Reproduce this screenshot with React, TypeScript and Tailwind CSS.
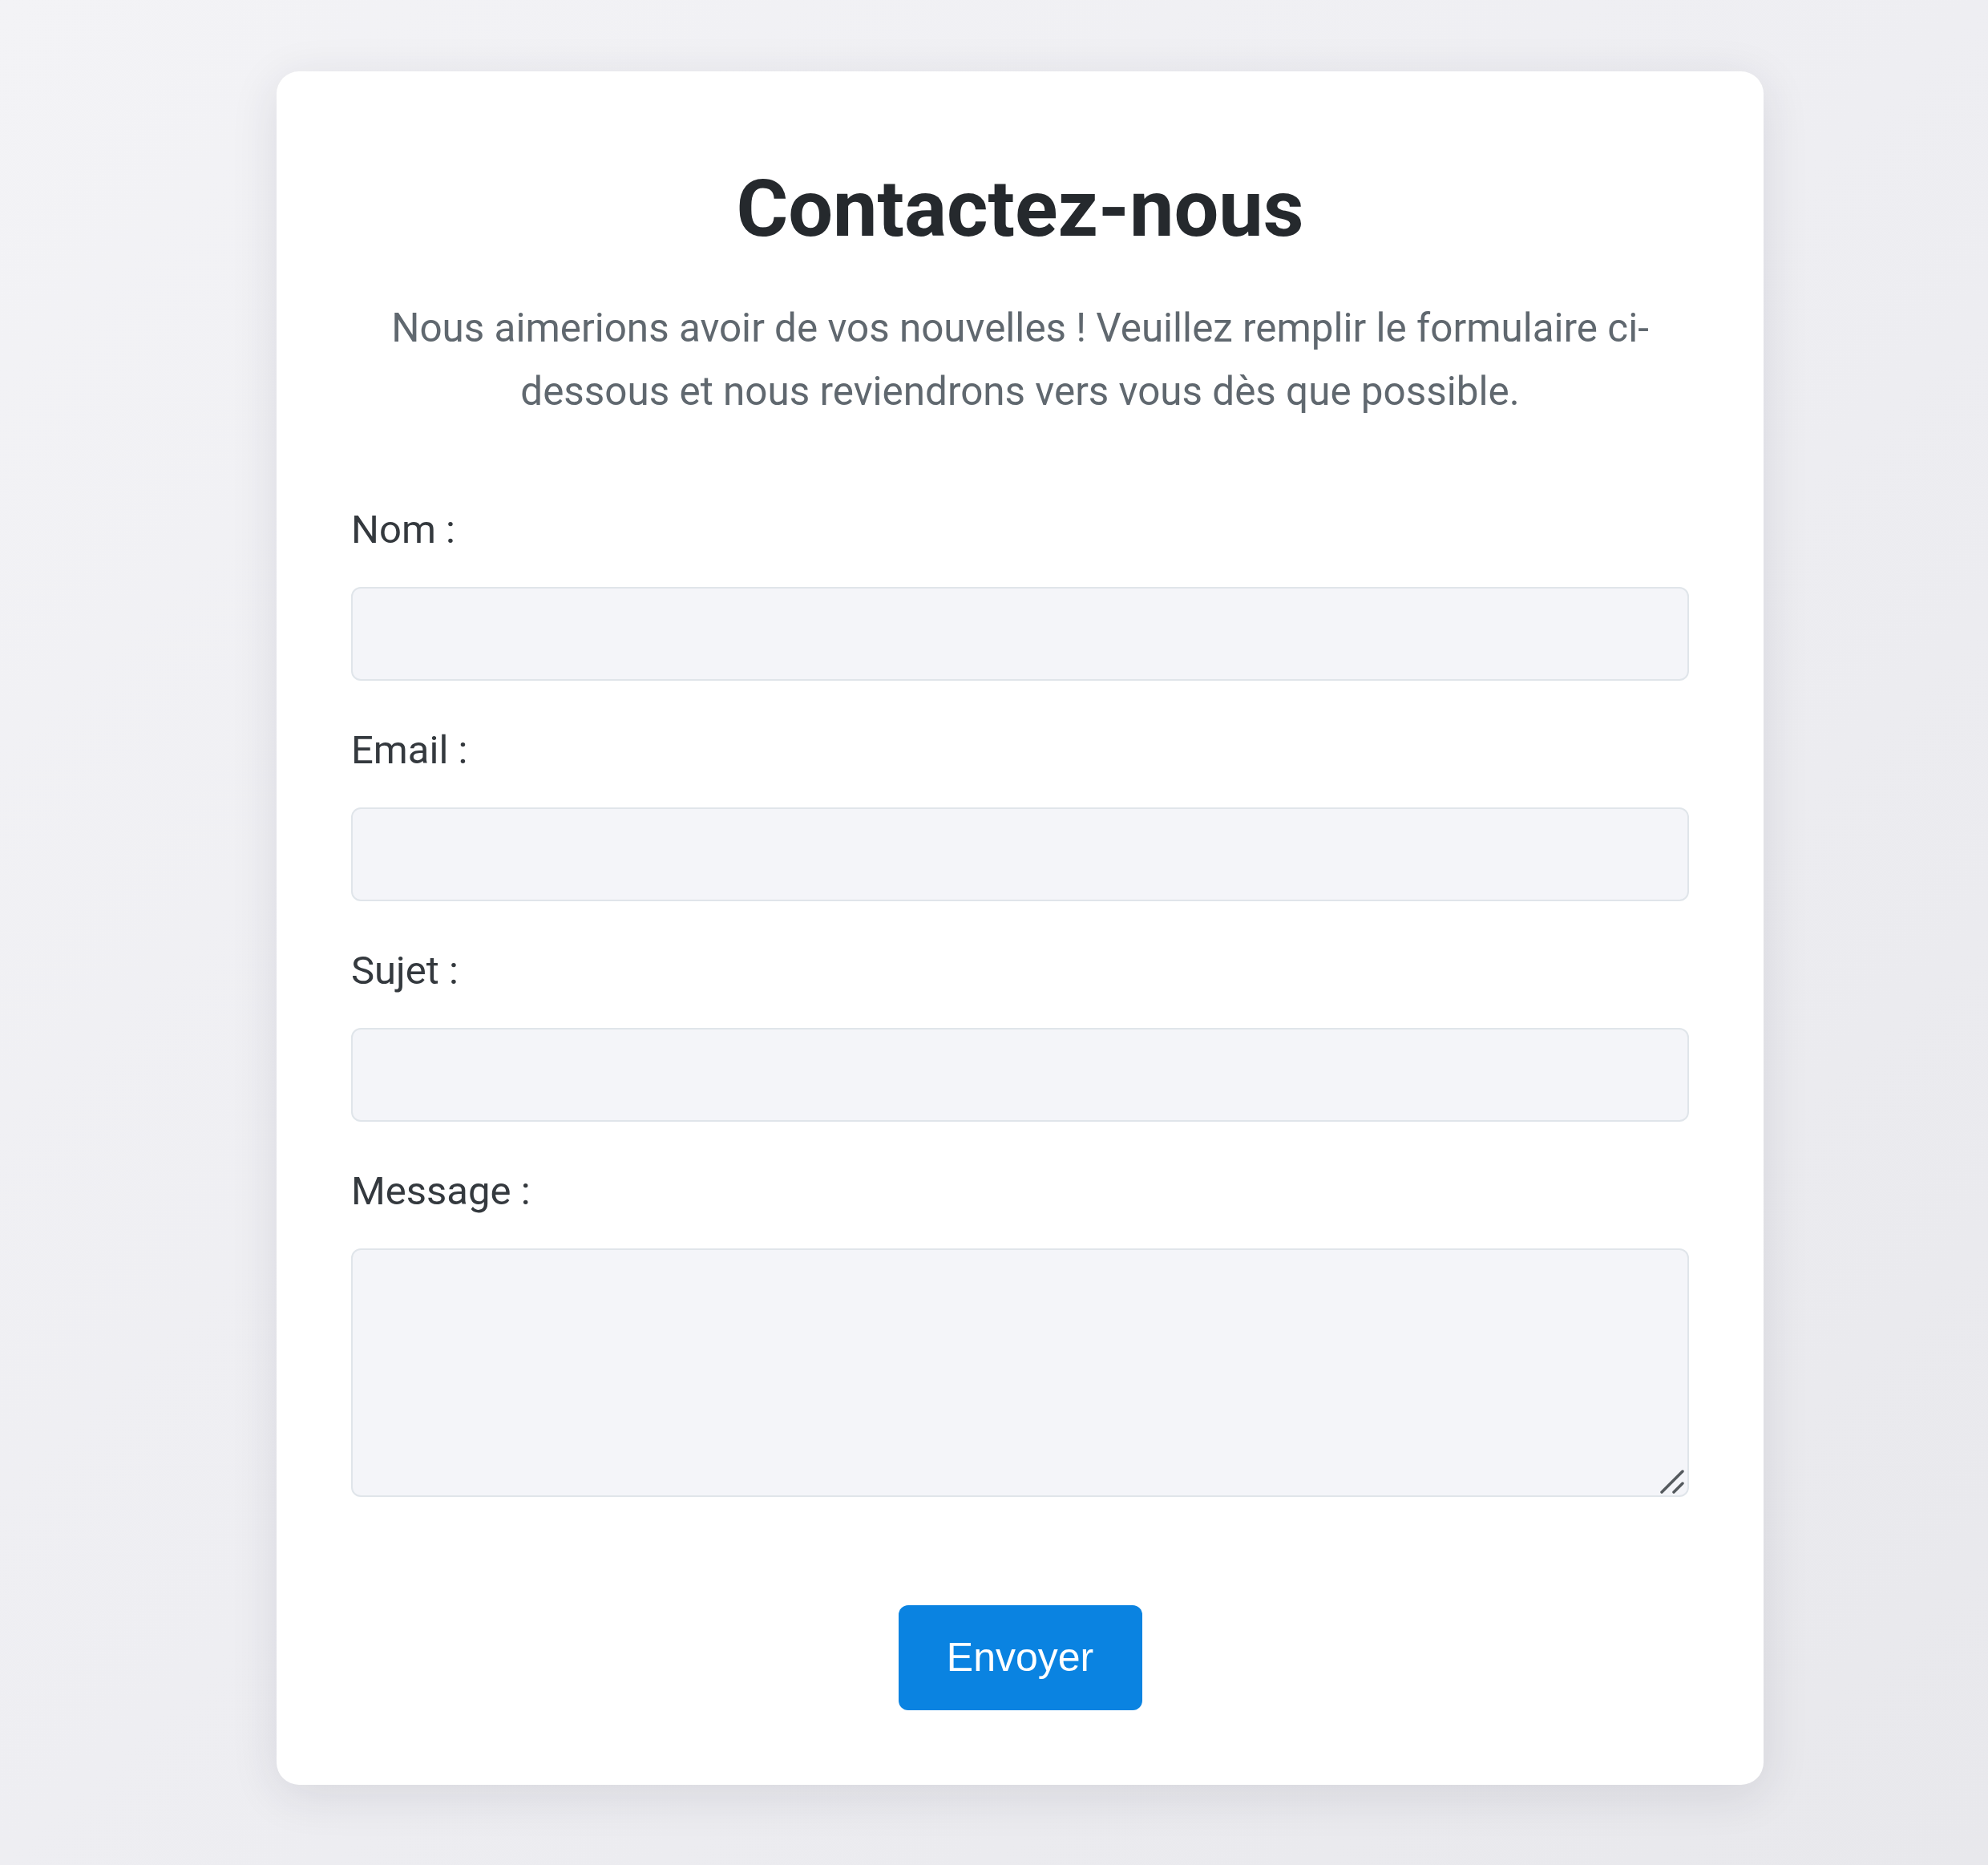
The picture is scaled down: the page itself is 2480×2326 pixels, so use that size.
import React from 'react';

const fields = [
    { id: 'nom', label: 'Nom :', type: 'text' },
    { id: 'email', label: 'Email :', type: 'email' },
    { id: 'sujet', label: 'Sujet :', type: 'text' },
];

const inputClass =
    'w-full rounded-[12px] border-2 border-[#e0e5ea] bg-[#f4f5f9] px-6 text-[46px] text-[#34393e] outline-none';

export default function App() {
    return (
        <div className="min-h-screen bg-gradient-to-br from-[#f3f3f6] via-[#eeeef2] to-[#e8e8ec] pt-[89px] pl-[345px] pb-[100px] font-['Roboto',sans-serif]">
            <div className="w-[1855px] rounded-[28px] bg-white px-[93px] pt-[112px] pb-[93px] shadow-[0_12px_60px_rgba(40,40,60,0.11)]">
                <h1 className="text-center text-[99px] leading-[1.2] font-bold text-[#25292d]">
                    Contactez-nous
                </h1>
                <p className="mt-[50px] text-center text-[49.4px] leading-[79px] text-[#60686f]">
                    Nous aimerions avoir de vos nouvelles ! Veuillez remplir le formulaire ci-dessous et nous
                    reviendrons vers vous dès que possible.
                </p>

                <form className="mt-[104px] flex flex-col gap-[58px]" onSubmit={(e) => e.preventDefault()}>
                    {fields.map((f) => (
                        <div key={f.id} className="flex flex-col gap-[43px]">
                            <label htmlFor={f.id} className="text-[49px] leading-[57px] text-[#34393e]">
                                {f.label}
                            </label>
                            <input id={f.id} type={f.type} className={`${inputClass} h-[117px]`} />
                        </div>
                    ))}
                    <div className="flex flex-col gap-[43px]">
                        <label htmlFor="message" className="text-[49px] leading-[57px] text-[#34393e]">
                            Message :
                        </label>
                        <div className="relative">
                            <textarea id="message" className={`${inputClass} block h-[310px] resize-none py-4`} />
                            {/* resize grip */}
                            <svg
                                className="pointer-events-none absolute right-[6px] bottom-[4px] h-[30px] w-[30px]"
                                viewBox="0 0 30 30"
                                fill="none"
                                stroke="#555a5e"
                                strokeWidth="3.5"
                                strokeLinecap="round"
                            >
                                <line x1="2" y1="28" x2="28" y2="2" />
                                <line x1="17" y1="28" x2="28" y2="17" />
                            </svg>
                        </div>
                    </div>

                    <div className="mt-[77px] flex justify-center">
                        <button
                            type="submit"
                            className="h-[131px] w-[304px] rounded-[12px] bg-[#0a83e1] font-['Liberation_Sans',Arial,sans-serif] text-[50px] text-white"
                        >
                            Envoyer
                        </button>
                    </div>
                </form>
            </div>
        </div>
    );
}
